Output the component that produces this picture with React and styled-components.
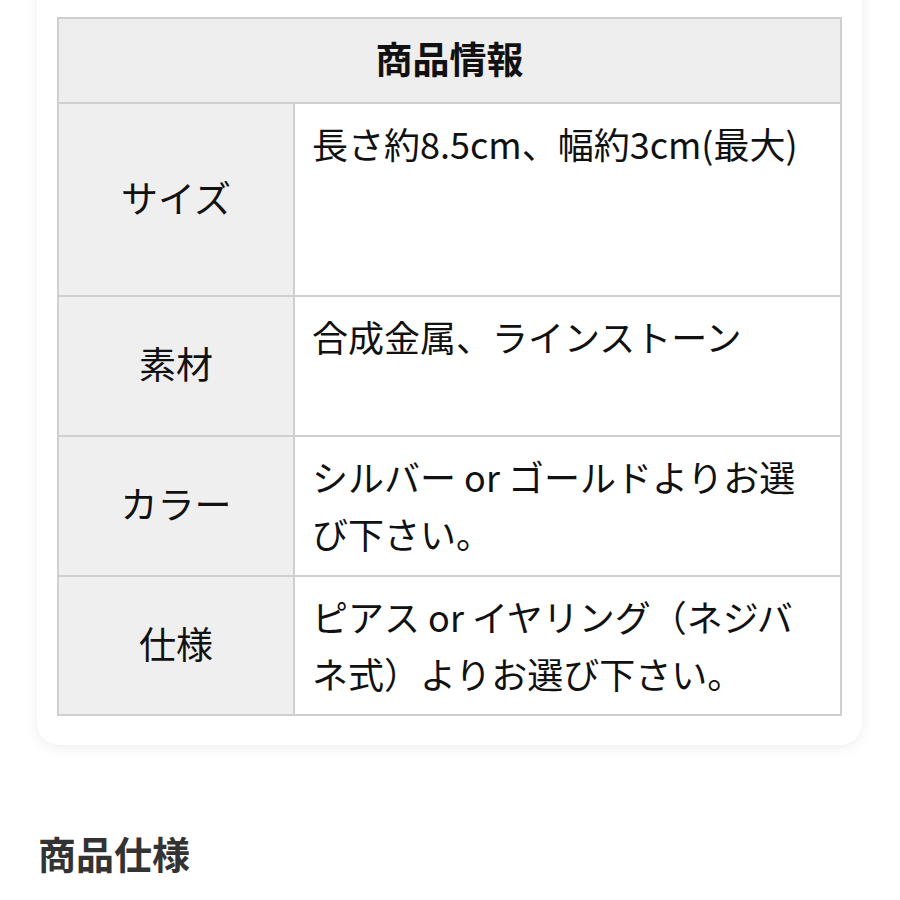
import React from "react";
import styled, { createGlobalStyle } from "styled-components";

const Global = createGlobalStyle`
  html, body { margin: 0; padding: 0; background: #ffffff; }
  body { font-family: "Noto Sans CJK JP", "Noto Sans", sans-serif; color: #111; overflow: hidden; }
`;

const Page = styled.div`
  width: 900px;
  height: 900px;
  overflow: hidden;
  display: flex;
  flex-direction: column;
`;

const Card = styled.section`
  margin: -30px 38px 0 37px;
  padding: 47px 20px 29px 20px;
  background: #fff;
  border-radius: 22px;
  box-shadow: 0 3px 14px rgba(0, 0, 0, 0.07);
`;

const Table = styled.table`
  width: 100%;
  border-collapse: collapse;
  table-layout: fixed;
  border: 2px solid #cfcfcf;
`;

const Col = styled.col`
  width: ${(p) => (p.$w ? `${p.$w}px` : "auto")};
`;

const HeadCell = styled.th`
  height: 78px;
  background: #eeeeee;
  border: 2px solid #cfcfcf;
  font-size: 37px;
  font-weight: 700;
  color: #111;
  text-align: center;
  vertical-align: middle;
  padding: 0 0 5px 0;
`;

const Row = styled.tr`
  height: ${(p) => p.$h}px;
`;

const Label = styled.th`
  background: #efefef;
  border: 2px solid #cfcfcf;
  font-size: 37px;
  font-weight: 400;
  color: #111;
  text-align: center;
  vertical-align: middle;
  padding: 0 0 6px 0;
`;

const Value = styled.td`
  border: 2px solid #cfcfcf;
  background: #fff;
  font-size: 36px;
  line-height: 57px;
  color: #111;
  vertical-align: top;
  padding: 11px 14px 11px 17px;
  text-align: left;
`;

const Heading = styled.h2`
  margin: 80px 0 0 38px;
  font-size: 38px;
  font-weight: 700;
  color: #333;
  line-height: 56px;
`;

const rows = [
  { label: "サイズ", value: "長さ約8.5cm、幅約3cm(最大)", h: 193 },
  { label: "素材", value: "合成金属、ラインストーン", h: 140 },
  { label: "カラー", value: "シルバー or ゴールドよりお選び下さい。", h: 140 },
  { label: "仕様", value: "ピアス or イヤリング（ネジバネ式）よりお選び下さい。", h: 139 },
];

export default function App() {
  return (
    <Page>
      <Global />
      <Card>
        <Table>
          <colgroup>
            <Col $w={236} />
            <Col />
          </colgroup>
          <thead>
            <tr>
              <HeadCell colSpan={2}>商品情報</HeadCell>
            </tr>
          </thead>
          <tbody>
            {rows.map((r) => (
              <Row key={r.label} $h={r.h}>
                <Label>{r.label}</Label>
                <Value>{r.value}</Value>
              </Row>
            ))}
          </tbody>
        </Table>
      </Card>
      <Heading>商品仕様</Heading>
    </Page>
  );
}
